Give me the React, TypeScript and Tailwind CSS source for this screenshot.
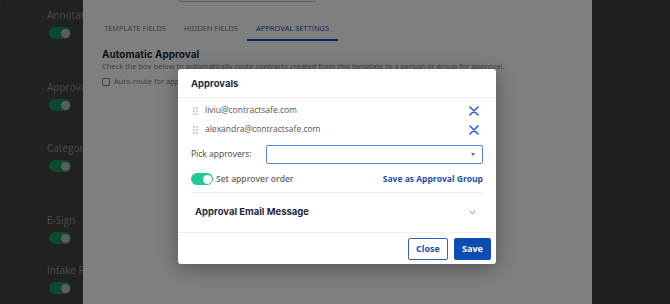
import React from "react";
import { ChevronDown } from "lucide-react";

const sideItems = [
  { label: "Annotations", mt: "mt-[9px]" },
  { label: "Approvals", mt: "mt-[42px]" },
  { label: "Categories", mt: "mt-[31px]" },
  { label: "E-Sign", mt: "mt-[42px]" },
  { label: "Intake Forms", mt: "mt-[20px]" },
];

const approvers = ["liviu@contractsafe.com", "alexandra@contractsafe.com"];

function Grip() {
  return (
    <div className="grid grid-cols-2 gap-x-[1px] gap-y-[1px] w-[5px]">
      {Array.from({ length: 6 }).map((_, i) => (
        <span key={i} className="w-[2px] h-[2px] bg-[#d4d4d4]" />
      ))}
    </div>
  );
}

function Toggle({ dim }: { dim?: boolean }) {
  return (
    <div className={`w-[22px] h-[12px] rounded-full flex items-center justify-end px-[1.5px] ${dim ? "bg-[#18945f]" : "bg-[#1fc998]"}`}>
      <span className={`w-[9px] h-[9px] rounded-full ${dim ? "bg-[#b8b8b8]" : "bg-white"}`} />
    </div>
  );
}

function RemoveIcon() {
  return (
    <svg width="10" height="10" viewBox="0 0 10 10" className="mr-[4px]">
      <path d="M1 1 L9 9 M9 1 L1 9" stroke="#2a5bd7" strokeWidth="1.6" strokeLinecap="round" fill="none" />
    </svg>
  );
}

export default function App() {
  return (
    <div className="relative w-[670px] h-[304px] overflow-hidden" style={{ fontFamily: '"Open Sans", "Noto Sans", sans-serif' }}>
      {/* underlying page */}
      <div className="flex h-full">
        <aside className="relative w-[83px] bg-[#424242] overflow-hidden pl-[47px] flex flex-col">
          <span className="absolute left-[7px] top-0 w-[1px] h-[6px] bg-[#2a4f9a]" />
          {sideItems.map((s) => (
            <div key={s.label} className={`${s.mt} flex flex-col gap-[6px]`}>
              <span className="text-[10px] leading-[12px] text-[#949494] whitespace-nowrap">{s.label}</span>
              <div className="ml-[2px]"><Toggle dim /></div>
            </div>
          ))}
        </aside>
        <main className="flex-1 bg-white px-[12px] relative overflow-hidden">
          <div className="ml-[83px] w-[138px] h-[3px] -mt-[1px] border border-[#bdbdbd] rounded-b-[3px]" />
          <nav className="flex mt-[17px] text-[7.5px] leading-[10px] text-[#777]">
            <span className="px-[9px] pt-[4px] pb-[8px]">TEMPLATE FIELDS</span>
            <span className="px-[9px] pt-[4px] pb-[8px]">HIDDEN FIELDS</span>
            <span className="px-[9px] pt-[4px] pb-[6px] text-[#0b4fb5] border-b-2 border-[#0b4fb5]">APPROVAL SETTINGS</span>
          </nav>
          <div className="pl-[7px] mt-[7px]">
            <h3 className="text-[10px] leading-[13px] font-bold text-[#1c2b3a]" style={{ fontFamily: "Inter, sans-serif" }}>Automatic Approval</h3>
            <p className="text-[7.5px] leading-[10px] text-[#7a7a7a] whitespace-nowrap">Check the box below to automatically route contracts created from this template to a person or group for approval.</p>
            <label className="flex items-center gap-[4px] mt-[5px] text-[7.5px] text-[#7a7a7a]">
              <span className="w-[8px] h-[8px] border border-[#888] rounded-[1px]" />
              Auto-route for approval
            </label>
          </div>
        </main>
        <aside className="w-[78px] bg-[#404040]" />
      </div>

      {/* overlay */}
      <div className="absolute inset-0 bg-black/50" />

      {/* modal */}
      <div className="absolute left-[178px] top-[69px] w-[318px] h-[195px] bg-white rounded-[3px] shadow-[0_4px_20px_rgba(0,0,0,0.35)] flex flex-col">
        <div className="h-[29px] flex items-center px-[13px] border-b border-[#eeeeee]">
          <h2 className="text-[9.5px] font-bold text-[#1c2a3c] pt-[2px]" style={{ fontFamily: "Inter, sans-serif" }}>Approvals</h2>
        </div>
        <div className="px-[13px] pt-[3px] flex flex-col">
          {approvers.map((a) => (
            <div key={a} className="h-[19px] flex items-center">
              <div className="ml-[2px] mr-[7px]"><Grip /></div>
              <span className="flex-1 text-[8.5px] text-[#555]">{a}</span>
              <RemoveIcon />
            </div>
          ))}
          <div className="flex items-center mt-[6px] h-[19px]">
            <span className="w-[75px] text-[8.5px] text-[#444]">Pick approvers:</span>
            <div className="flex-1 h-[19px] border-[1.5px] border-[#5b86d6] rounded-[2px] flex items-center justify-end pr-[7px]">
              <span className="w-0 h-0 border-l-[2.5px] border-r-[2.5px] border-t-[3px] border-l-transparent border-r-transparent border-t-[#666]" />
            </div>
          </div>
          <div className="flex items-center mt-[9px] h-[12px]">
            <Toggle />
            <span className="ml-[3px] text-[8.5px] font-semibold text-[#666]">Set approver order</span>
            <span className="ml-auto text-[8.5px] font-bold text-[#1e4fa8]">Save as Approval Group</span>
          </div>
          <div className="mt-[7px] border-t border-[#f0f0f0]" />
          <div className="h-[39px] flex items-center pl-[4px] pr-[6px]">
            <span className="flex-1 text-[9.5px] font-bold text-[#1c2a3c]" style={{ fontFamily: "Inter, sans-serif" }}>Approval Email Message</span>
            <ChevronDown className="w-[9px] h-[9px]" color="#555" strokeWidth={2} />
          </div>
        </div>
        <div className="mt-auto border-t border-[#f0f0f0] h-[32px] flex items-center justify-end gap-[6px] pr-[5px]">
          <button className="w-[40px] h-[22px] border border-[#2f62c0] rounded-[2px] text-[9px] font-bold text-[#1e4fa8]">Close</button>
          <button className="w-[37px] h-[22px] bg-[#0b4db3] rounded-[2px] text-[9px] font-bold text-white">Save</button>
        </div>
      </div>
    </div>
  );
}
